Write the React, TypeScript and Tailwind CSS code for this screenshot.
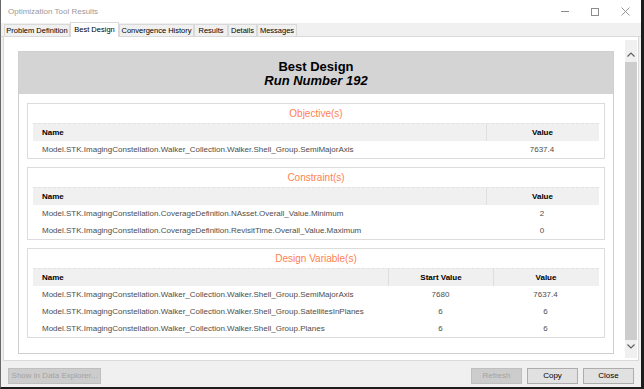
const font = { fontFamily: '"Liberation Sans", Arial, sans-serif' };

const tabs = [
  { label: "Problem Definition", w: "w-[66px]" },
  { label: "Best Design", w: "w-[49px]", active: true },
  { label: "Convergence History", w: "w-[75px]" },
  { label: "Results", w: "w-[34px]" },
  { label: "Details", w: "w-[29px]" },
  { label: "Messages", w: "w-[40px]" },
];

function Panel({
  title,
  columns,
  rows,
}: {
  title: string;
  columns: { label: string; w: string; align: string }[];
  rows: string[][];
}) {
  return (
    <div className="border border-[#dcdcdc] bg-white px-[5px]">
      <div className="h-[19px] flex items-center justify-center text-[10px] text-[#ff7f50]">
        {title}
      </div>
      <div className="flex h-[18px] bg-[#f0f0f0] border-t border-dashed border-[#e2e2e2]">
        {columns.map((c, i) => (
          <div
            key={c.label}
            className={`${c.w} flex items-center text-[8px] font-bold text-black ${c.align} ${
              i > 0 ? "border-l border-[#dedede]" : ""
            }`}
          >
            {c.label}
          </div>
        ))}
      </div>
      {rows.map((r, ri) => (
        <div key={ri} className="flex h-[17px]">
          {r.map((cell, ci) => (
            <div
              key={ci}
              className={`${columns[ci].w} flex items-center text-[8px] text-[#4d4d4d] whitespace-nowrap ${columns[ci].align}`}
            >
              {cell}
            </div>
          ))}
        </div>
      ))}
    </div>
  );
}

export default function App() {
  const two = [
    { label: "Name", w: "w-[453px]", align: "pl-[9px]" },
    { label: "Value", w: "w-[112px]", align: "justify-center" },
  ];
  const three = [
    { label: "Name", w: "w-[355px]", align: "pl-[9px]" },
    { label: "Start Value", w: "w-[105px]", align: "justify-center" },
    { label: "Value", w: "w-[105px]", align: "justify-center" },
  ];
  const prefix = "Model.STK.ImagingConstellation.";
  return (
    <div
      style={font}
      className="w-[644px] h-[389px] flex flex-col bg-[#f0f0f0] border-l border-l-[#6a6a6a] border-r-[3px] border-r-[#1c1c1c] border-b-[2px] border-b-[#1c1c1c]"
    >
      {/* title bar */}
      <div className="h-[23px] shrink-0 bg-white flex items-center">
        <span className="pl-[7px] text-[8px] text-[#9a9a9a]">Optimization Tool Results</span>
        <div className="ml-auto mr-[1px] flex h-full">
          <div className="w-[30px] flex items-center justify-center">
            <div className="w-[8px] h-px bg-[#8c8c8c]" />
          </div>
          <div className="w-[30px] flex items-center justify-center">
            <div className="w-[8px] h-[8px] border border-[#8c8c8c]" />
          </div>
          <div className="w-[30px] flex items-center justify-center">
            <svg width="9" height="9" viewBox="0 0 9 9">
              <path d="M0.5 0.5 L8.5 8.5 M8.5 0.5 L0.5 8.5" stroke="#8c8c8c" strokeWidth="0.9" />
            </svg>
          </div>
        </div>
      </div>

      {/* tab strip */}
      <div className="h-[14px] shrink-0 flex items-end pl-[3px] border-b border-[#d9d9d9]">
        {tabs.map((t) =>
          t.active ? (
            <div
              key={t.label}
              className={`${t.w} h-[15px] -mb-px bg-white border border-b-0 border-[#d9d9d9] flex items-center justify-center text-[7.5px] text-black whitespace-nowrap`}
            >
              {t.label}
            </div>
          ) : (
            <div
              key={t.label}
              className={`${t.w} h-[12px] bg-[#f0f0f0] border border-b-0 border-[#d9d9d9] flex items-center justify-center text-[7.5px] text-black whitespace-nowrap`}
            >
              {t.label}
            </div>
          )
        )}
      </div>

      {/* page */}
      <div className="h-[324px] shrink-0 mx-[2px] bg-white border-x border-b border-[#d9d9d9] flex overflow-hidden">
        <div className="pl-[14px] pt-[14px]">
          <div className="w-[596px] border border-[#cfcfcf] bg-white">
            <div className="h-[42px] bg-[#d4d4d4] flex flex-col items-center justify-center pt-[2px] text-[13px] font-bold text-black leading-[14px]">
              <div>Best Design</div>
              <div className="italic">Run Number 192</div>
            </div>
            <div className="px-[8px] pt-[9px] pb-[15px] flex flex-col gap-[8px]">
              <Panel
                title="Objective(s)"
                columns={two}
                rows={[[prefix + "Walker_Collection.Walker.Shell_Group.SemiMajorAxis", "7637.4"]]}
              />
              <Panel
                title="Constraint(s)"
                columns={two}
                rows={[
                  [prefix + "CoverageDefinition.NAsset.Overall_Value.Minimum", "2"],
                  [prefix + "CoverageDefinition.RevisitTime.Overall_Value.Maximum", "0"],
                ]}
              />
              <Panel
                title="Design Variable(s)"
                columns={three}
                rows={[
                  [prefix + "Walker_Collection.Walker.Shell_Group.SemiMajorAxis", "7680", "7637.4"],
                  [prefix + "Walker_Collection.Walker.Shell_Group.SatellitesInPlanes", "6", "6"],
                  [prefix + "Walker_Collection.Walker.Shell_Group.Planes", "6", "6"],
                ]}
              />
            </div>
          </div>
        </div>

        {/* scrollbar */}
        <div className="ml-[11px] mt-[3px] mb-[2px] w-[12px] bg-[#f0f0f0] flex flex-col">
          <div className="h-[22px] flex items-end justify-center pb-[5px]">
            <svg width="8" height="5" viewBox="0 0 8 5">
              <path d="M0.5 4.5 L4 1 L7.5 4.5" fill="none" stroke="#606060" strokeWidth="1.2" />
            </svg>
          </div>
          <div className="flex-1 bg-[#cdcdcd]" />
          <div className="h-[18px] flex items-start justify-center pt-[4px]">
            <svg width="8" height="5" viewBox="0 0 8 5">
              <path d="M0.5 0.5 L4 4 L7.5 0.5" fill="none" stroke="#606060" strokeWidth="1.2" />
            </svg>
          </div>
        </div>
      </div>

      {/* button bar */}
      <div className="flex-1 flex items-start pt-[7px] pl-[7px] pr-[7px] text-[8px]">
        <button className="w-[93px] h-[16px] bg-[#cccccc] border border-[#bfbfbf] text-[#a3a3a3]">
          Show in Data Explorer...
        </button>
        <div className="ml-auto flex gap-[5px]">
          <button className="w-[51px] h-[16px] bg-[#cccccc] border border-[#bfbfbf] text-[#a3a3a3]">
            Refresh
          </button>
          <button className="w-[51px] h-[16px] bg-[#e1e1e1] border border-[#adadad] text-black">
            Copy
          </button>
          <button className="w-[51px] h-[16px] bg-[#e1e1e1] border border-[#adadad] text-black">
            Close
          </button>
        </div>
      </div>
    </div>
  );
}
